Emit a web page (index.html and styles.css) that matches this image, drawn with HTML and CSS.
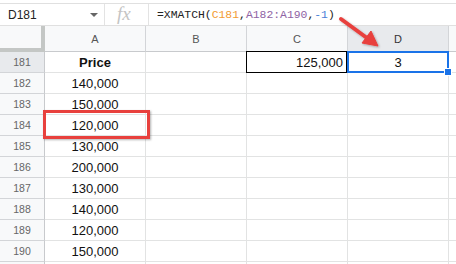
FILE: index.html
```html
<!DOCTYPE html>
<html lang="en">
  <head>
    <meta charset="UTF-8" />
    <title>XMATCH</title>
    <link rel="stylesheet" href="styles.css">
  </head>
  <body>
    <div class="page">
      <div class="formula-bar">
        <div class="name-box">
          <span>D181</span>
          <span class="caret"></span>
        </div>
        <div class="fx">fx</div>
        <div class="formula">=XMATCH(<span class="ref1">C181</span>,<span class="ref2">A182:A190</span>,<span class="num">-1</span>)</div>
      </div>

      <div class="sheet">
        <div class="corner"></div>
        <div class="col-head">A</div>
        <div class="col-head">B</div>
        <div class="col-head">C</div>
        <div class="col-head active">D</div>
        <div class="col-head"></div>

        <div class="row-head active">181</div>
        <div class="cell center bold">Price</div>
        <div class="cell"></div>
        <div class="cell right outlined">125,000</div>
        <div class="cell center selected">3</div>
        <div class="cell"></div>

        <div class="row-head">182</div>
        <div class="cell center">140,000</div>
        <div class="cell"></div><div class="cell"></div><div class="cell"></div><div class="cell"></div>

        <div class="row-head">183</div>
        <div class="cell center">150,000</div>
        <div class="cell"></div><div class="cell"></div><div class="cell"></div><div class="cell"></div>

        <div class="row-head">184</div>
        <div class="cell center">120,000</div>
        <div class="cell"></div><div class="cell"></div><div class="cell"></div><div class="cell"></div>

        <div class="row-head">185</div>
        <div class="cell center">130,000</div>
        <div class="cell"></div><div class="cell"></div><div class="cell"></div><div class="cell"></div>

        <div class="row-head">186</div>
        <div class="cell center">200,000</div>
        <div class="cell"></div><div class="cell"></div><div class="cell"></div><div class="cell"></div>

        <div class="row-head">187</div>
        <div class="cell center">130,000</div>
        <div class="cell"></div><div class="cell"></div><div class="cell"></div><div class="cell"></div>

        <div class="row-head">188</div>
        <div class="cell center">140,000</div>
        <div class="cell"></div><div class="cell"></div><div class="cell"></div><div class="cell"></div>

        <div class="row-head">189</div>
        <div class="cell center">120,000</div>
        <div class="cell"></div><div class="cell"></div><div class="cell"></div><div class="cell"></div>

        <div class="row-head">190</div>
        <div class="cell center">150,000</div>
        <div class="cell"></div><div class="cell"></div><div class="cell"></div><div class="cell"></div>

        <div class="row-head"></div>
        <div class="cell"></div>
        <div class="cell"></div><div class="cell"></div><div class="cell"></div><div class="cell"></div>
      </div>

      <!-- annotations drawn over the sheet -->
      <div class="highlight-box"></div>
      <svg class="arrow" width="456" height="264" viewBox="0 0 456 264">
        <defs>
          <filter id="shadow" x="-20%" y="-20%" width="140%" height="140%">
            <feDropShadow dx="1" dy="1" stdDeviation="1" flood-color="#000" flood-opacity="0.3" />
          </filter>
        </defs>
        <g filter="url(#shadow)" fill="#e8403d" stroke="#e8403d">
          <line x1="341" y1="19" x2="367" y2="38" stroke-width="4" stroke-linecap="round" />
          <polygon points="378,46 362,43 371,31" stroke-width="1" stroke-linejoin="round" />
        </g>
      </svg>
    </div>
  </body>
</html>
```

FILE: styles.css
```css
* {
  box-sizing: border-box;
}
body {
  margin: 0;
  background: #fff;
  font-family: "Liberation Sans", Arial, sans-serif;
}
.page {
  position: relative;
  width: 456px;
  height: 264px;
  overflow: hidden;
}

/* formula bar */
.formula-bar {
  display: flex;
  align-items: center;
  height: 23px;
  margin-top: 3px;
  border-top: 1px solid #e0e0e0;
  border-bottom: 1px solid #e0e0e0;
}
.name-box {
  display: flex;
  align-items: center;
  justify-content: space-between;
  width: 105px;
  height: 100%;
  padding: 0 6px 0 8px;
  border-right: 1px solid #e3e3e3;
  font-size: 12px;
  color: #222;
}
.caret {
  width: 0;
  height: 0;
  border-left: 4px solid transparent;
  border-right: 4px solid transparent;
  border-top: 4px solid #666;
  margin-top: 1px;
}
.fx {
  width: 44px;
  height: 100%;
  padding-left: 12px;
  border-right: 1px solid #e3e3e3;
  font-family: "Liberation Serif", serif;
  font-style: italic;
  font-size: 19px;
  line-height: 20px;
  color: #c4c4c4;
}
.formula {
  padding-left: 8px;
  font-family: "Liberation Mono", monospace;
  font-size: 11.4px;
  color: #222;
}
.ref1 {
  color: #f29b33;
}
.ref2 {
  color: #8f63a4;
}
.num {
  color: #4a7fd6;
}

/* grid */
.sheet {
  display: grid;
  grid-template-columns: 45px repeat(5, 101px);
  grid-template-rows: 26px repeat(11, 21px);
}
.corner {
  background: #f8f9fa;
  border-right: 4px solid #c4c7c5;
  border-bottom: 4px solid #c4c7c5;
}
.col-head {
  display: flex;
  align-items: center;
  justify-content: center;
  background: #f8f9fa;
  border-right: 1px solid #d3d5d8;
  border-bottom: 1px solid #c8cacd;
  font-size: 11px;
  color: #555;
}
.col-head.active {
  background: #e8eaed;
  color: #333;
}
.row-head {
  display: flex;
  align-items: center;
  justify-content: center;
  background: #f8f9fa;
  border-right: 1px solid #c8cacd;
  border-bottom: 1px solid #d3d5d8;
  font-size: 10.5px;
  color: #666;
}
.row-head.active {
  background: #e8eaed;
}
.cell {
  position: relative;
  display: flex;
  align-items: center;
  padding: 0 4px;
  border-right: 1px solid #e2e3e3;
  border-bottom: 1px solid #e2e3e3;
  font-size: 13px;
  color: #111;
}
.center {
  justify-content: center;
}
.right {
  justify-content: flex-end;
}
.bold {
  font-weight: bold;
}
.outlined::after {
  content: "";
  position: absolute;
  inset: -1px 0 -1px -1px;
  border: 1px solid #000;
}
.selected::after {
  content: "";
  position: absolute;
  inset: -1px -1px -1px -1px;
  border: 2px solid #1a73e8;
}
.selected::before {
  content: "";
  position: absolute;
  right: -4px;
  bottom: -4px;
  width: 6px;
  height: 6px;
  background: #1a73e8;
  border: 1px solid #fff;
  z-index: 1;
}

/* annotations */
.highlight-box {
  position: absolute;
  left: 43px;
  top: 110px;
  width: 107px;
  height: 29px;
  border: 3px solid #e8403d;
  box-shadow: 1px 1px 2px rgba(0, 0, 0, 0.3);
}
.arrow {
  position: absolute;
  left: 0;
  top: 0;
}
```
